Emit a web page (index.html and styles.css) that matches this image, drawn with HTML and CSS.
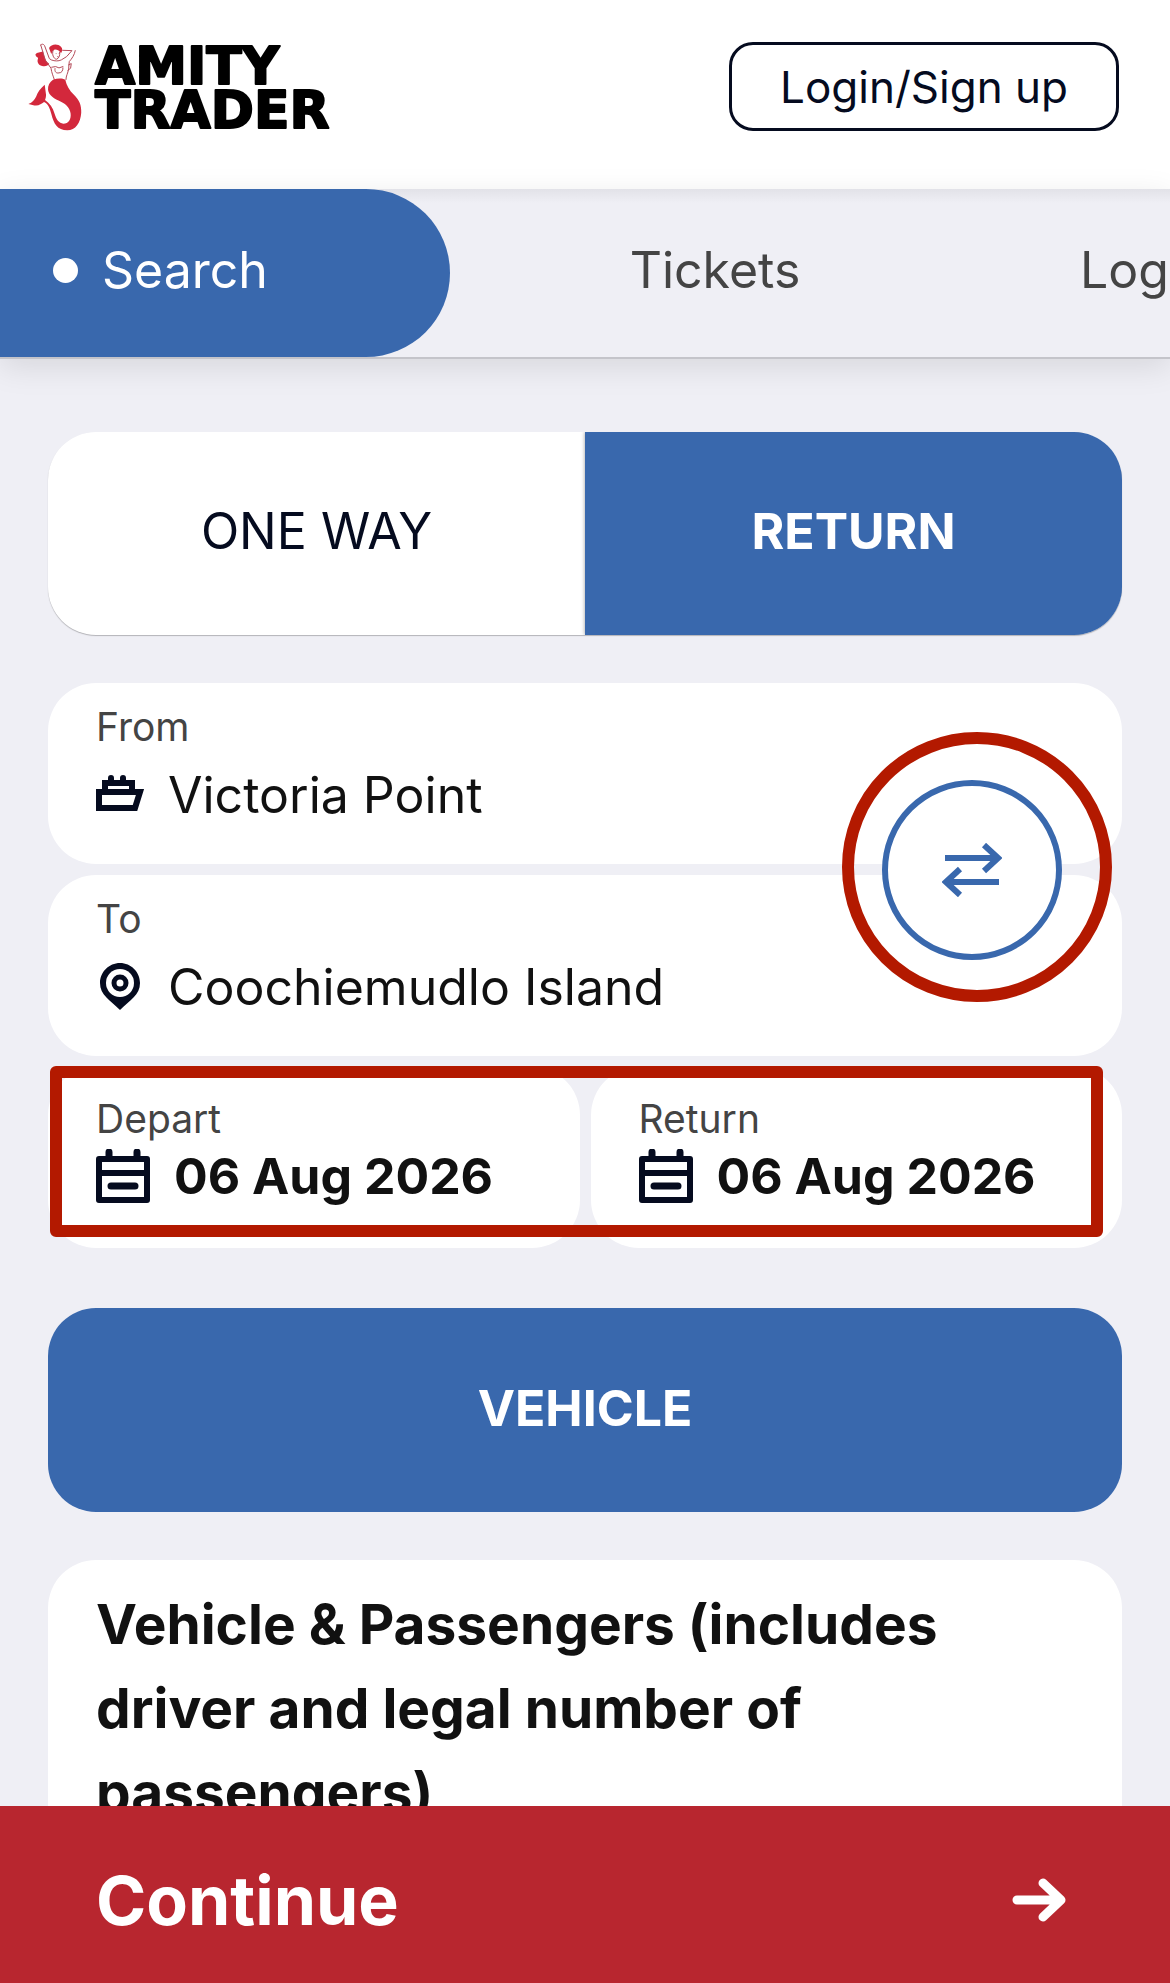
FILE: index.html
```
<!DOCTYPE html>
<html lang="en">
<head>
    <meta charset="UTF-8">
    <meta name="viewport" content="width=device-width, initial-scale=1.0">
    <title>Amity Trader</title>
    <link rel="stylesheet" href="styles.css">
</head>
<body>
    <header class="header">
        <a class="logo" href="#">
            <svg class="mermaid" viewBox="80 64 168 268" aria-hidden="true">
                <!-- hair -->
                <path d="M146 82c6-12 26-14 36-4 6 6 4 14 0 20-4-8-12-12-20-11-6 4-8 8-9 14z" fill="#d3283c"/>
                <path d="M128 92c-8 4-18 2-23 10 2 10 8 6 8 12-6 14 6 24 18 23 8 0 13-2 15-8-10-6-14-18-18-37z" fill="#d3283c"/>
                <!-- arms and body -->
                <path d="M121 73c4-5 10-2 12 3l14 38 6 4c10 4 22 4 30 0l16-10 16-18-28-1M121 73l14 46 17 24c2 14 6 22 10 34M225 90c-2 12-10 24-18 33l-2 22c-2 14-8 20-8 32M158 90c-4 12 2 24 10 26 8-2 12-12 10-22M154 140l12-2 10 4 12-4M164 144c-2 10 4 15 12 13 8 0 12-6 12-15M205 133l8-4-2 14-8 6" fill="none" stroke="#b44a58" stroke-width="3" stroke-linecap="round" stroke-linejoin="round"/>
                <path d="M166 99h3m6 0h3m-8 9h5" stroke="#b44a58" stroke-width="2" fill="none"/>
                <!-- tail -->
                <path d="M158 178c14-5 28-5 37 0 4 18 12 32 26 45 16 15 23 32 22 54-2 30-17 53-42 53-30 0-41-20-48-49-4-16-10-31-22-36-8 6-16 12-29 10l-18-4c12-5 18-12 23-22 5-13 12-24 26-36l4 30c0 8-2 12-3 16 14 10 24 23 28 39 6 20 14 31 27 32 16 0 24-14 22-31-2-16-14-28-29-35-20-9-37-18-39-36-1-13 5-23 15-30z" fill="#d3283c"/>
            </svg>
            <svg class="wordmark" viewBox="0 0 260 89">
                <text x="1" y="42">AMITY</text>
                <text x="1" y="86">TRADER</text>
            </svg>
        </a>
        <button class="login" type="button">Login/Sign up</button>
    </header>

    <nav class="tabs">
        <a class="tab active" href="#"><span class="dot"></span>Search</a>
        <a class="tab tickets" href="#">Tickets</a>
        <a class="tab account" href="#">Login</a>
    </nav>

    <main class="main">
        <div class="toggle">
            <button class="toggle-option" type="button">ONE WAY</button>
            <button class="toggle-option selected" type="button">RETURN</button>
        </div>

        <div class="fields">
            <div class="route">
                <div class="card field">
                    <label for="from">From</label>
                    <div class="value">
                        <svg class="icon" viewBox="0 0 48 48" aria-hidden="true">
                            <path d="M15 7v5M27 7v5" fill="none" stroke="#050b1f" stroke-width="6" stroke-linecap="round"/>
                            <path d="M9 20v-8h27v8M3 21h41l-5 16H3z" fill="none" stroke="#050b1f" stroke-width="6"/>
                        </svg>
                        <select id="from">
                            <option>Victoria Point</option>
                        </select>
                    </div>
                </div>
                <div class="card field">
                    <label for="to">To</label>
                    <div class="value">
                        <svg class="icon" viewBox="0 0 48 48" aria-hidden="true">
                            <path d="M24 0C13 0 4 9 4 20c0 12 10 17 20 27 10-10 20-15 20-27C44 9 35 0 24 0z" fill="#050b1f"/>
                            <circle cx="24" cy="20" r="14" fill="#fff"/>
                            <circle cx="24" cy="20" r="6" fill="none" stroke="#050b1f" stroke-width="5"/>
                        </svg>
                        <select id="to">
                            <option>Coochiemudlo Island</option>
                        </select>
                    </div>
                </div>
                <button class="swap" type="button" aria-label="Swap">
                    <svg viewBox="0 0 60 54" aria-hidden="true">
                        <path d="M3 15h52M42 2l14 13-14 13M57 39H5M18 26L4 39l14 13" fill="none" stroke="#3968ad" stroke-width="6"/>
                    </svg>
                </button>
                <div class="ring"></div>
            </div>

            <div class="dates">
                <div class="card field date">
                    <label for="depart">Depart</label>
                    <div class="value">
                        <svg class="calendar" viewBox="0 0 54 54" aria-hidden="true">
                            <path d="M13 3v6M41 3v6M15 37h24" fill="none" stroke="#050b1f" stroke-width="7" stroke-linecap="round"/>
                            <path d="M3 10h48v41H3zM3 24h48" fill="none" stroke="#050b1f" stroke-width="6" stroke-linejoin="round"/>
                        </svg>
                        <input type="text" id="depart" value="06 Aug 2026" readonly>
                    </div>
                </div>
                <div class="card field date">
                    <label for="return">Return</label>
                    <div class="value">
                        <svg class="calendar" viewBox="0 0 54 54" aria-hidden="true">
                            <path d="M13 3v6M41 3v6M15 37h24" fill="none" stroke="#050b1f" stroke-width="7" stroke-linecap="round"/>
                            <path d="M3 10h48v41H3zM3 24h48" fill="none" stroke="#050b1f" stroke-width="6" stroke-linejoin="round"/>
                        </svg>
                        <input type="text" id="return" value="06 Aug 2026" readonly>
                    </div>
                </div>
                <div class="frame"></div>
            </div>
        </div>

        <button class="vehicle" type="button">VEHICLE</button>

        <section class="card passengers">
            <h2>Vehicle &amp; Passengers (includes driver and legal number of passengers)</h2>
        </section>
    </main>

    <button class="continue" type="button">
        Continue
        <svg viewBox="0 0 54 46" aria-hidden="true">
            <path d="M5 23h42M31 6l18 17-18 17" fill="none" stroke="#fff" stroke-width="9" stroke-linecap="round" stroke-linejoin="round"/>
        </svg>
    </button>
</body>
</html>
```
FILE: styles.css
```
* {
    box-sizing: border-box;
}

body {
    margin: 0;
    height: 100vh;
    display: flex;
    flex-direction: column;
    overflow: hidden;
    font-family: Inter, "Liberation Sans", sans-serif;
    background-color: #efeff5;
    color: #111;
}

button,
select,
input {
    font: inherit;
    color: inherit;
    border: none;
    padding: 0;
    margin: 0;
    background: none;
}

button {
    cursor: pointer;
}

a {
    text-decoration: none;
    color: inherit;
}

/* Header */
.header {
    flex: none;
    display: flex;
    justify-content: space-between;
    align-items: center;
    padding: 42px 51px 58px 27px;
    background-color: white;
}

.logo {
    display: flex;
    align-items: center;
    gap: 11px;
}

.mermaid {
    width: 56px;
    height: 89px;
}

.wordmark {
    width: 260px;
    height: 89px;
    overflow: visible;
    font-family: "DejaVu Sans", sans-serif;
    font-weight: bold;
    font-size: 52px;
    fill: black;
    stroke: black;
    stroke-width: 2px;
    stroke-linejoin: round;
}

.login {
    height: 89px;
    padding: 0 48px;
    border: 3px solid #050b1f;
    border-radius: 24px;
    font-size: 44px;
    color: #050b1f;
}

/* Tabs */
.tabs {
    flex: none;
    display: flex;
    position: relative;
    z-index: 1;
    height: 170px;
    border-bottom: 2px solid #c4c4ca;
    background: linear-gradient(#e2e2e8, #efeff5 14px);
    box-shadow: 0 8px 30px rgba(0, 0, 0, 0.1);
    font-size: 50px;
    color: #444;
    white-space: nowrap;
}

.tab {
    flex: none;
    display: flex;
    align-items: center;
    padding-bottom: 6px;
}

.tab.active {
    width: 450px;
    padding-left: 53px;
    gap: 24px;
    border-radius: 0 84px 84px 0;
    background-color: #3968ad;
    color: white;
}

.dot {
    width: 25px;
    height: 25px;
    border-radius: 50%;
    background-color: white;
}

.tab.tickets {
    flex: 0 0 530px;
    justify-content: center;
}

.tab.account {
    flex: 1 0 0;
    min-width: 0;
    padding-left: 100px;
    overflow: hidden;
}

/* Search form */
.main {
    flex: 1;
    min-height: 0;
    padding: 73px 48px 0;
    overflow: hidden;
}

.toggle {
    display: flex;
    border-radius: 48px;
    overflow: hidden;
    background-color: white;
    box-shadow: 0 1px 1px rgba(0, 0, 0, 0.25);
}

.toggle-option {
    flex: 1;
    height: 203px;
    padding-bottom: 6px;
    font-size: 50px;
    color: #050b1f;
}

.toggle-option.selected {
    background-color: #3968ad;
    color: white;
    font-weight: bold;
    box-shadow: 0 0 4px rgba(0, 0, 0, 0.4);
}

.fields {
    display: flex;
    flex-direction: column;
    gap: 11px;
    margin-top: 48px;
}

.route {
    display: flex;
    flex-direction: column;
    gap: 11px;
    position: relative;
}

.card {
    background-color: white;
    border-radius: 48px;
}

.field {
    display: flex;
    flex-direction: column;
    gap: 14px;
    height: 181px;
    padding: 20px 48px 0;
}

.field label {
    font-size: 39px;
    line-height: 48px;
    color: #444;
}

.value {
    display: flex;
    align-items: center;
    gap: 24px;
    height: 60px;
    font-size: 50px;
}

.icon {
    width: 48px;
    height: 48px;
}

.value select {
    appearance: none;
    line-height: 60px;
}

.dates {
    display: flex;
    gap: 11px;
    position: relative;
}

.date {
    flex: 1;
    min-width: 0;
    gap: 3px;
    padding: 28px 0 0 48px;
}

.calendar {
    flex: none;
    width: 54px;
    height: 54px;
}

.value input {
    flex: 1;
    min-width: 0;
    height: 60px;
    font-weight: bold;
}

.swap {
    position: absolute;
    top: calc(50% - 90px);
    right: 60px;
    width: 180px;
    height: 180px;
    border: 6px solid #3968ad;
    border-radius: 50%;
    background-color: white;
    display: flex;
    justify-content: center;
    align-items: center;
}

.swap svg {
    width: 60px;
    height: 54px;
}

/* Red highlights */
.ring {
    position: absolute;
    top: 49px;
    right: 10px;
    width: 270px;
    height: 270px;
    border: 12px solid #b31900;
    border-radius: 50%;
    pointer-events: none;
}

.frame {
    position: absolute;
    top: -1px;
    right: 19px;
    bottom: 11px;
    left: 2px;
    border: 12px solid #b31900;
    border-radius: 6px;
    pointer-events: none;
}

.vehicle {
    display: block;
    width: 100%;
    height: 204px;
    margin-top: 60px;
    padding-bottom: 4px;
    border-radius: 48px;
    background-color: #3968ad;
    color: white;
    font-size: 50px;
    font-weight: bold;
}

.passengers {
    margin-top: 48px;
    padding: 22px 48px;
}

.passengers h2 {
    margin: 0;
    max-width: 900px;
    font-size: 55px;
    line-height: 84px;
}

/* Bottom bar */
.continue {
    flex: none;
    display: flex;
    justify-content: space-between;
    align-items: center;
    width: 100%;
    height: 177px;
    padding: 10px 104px 0 96px;
    background-color: #b8262f;
    color: white;
    font-size: 68px;
    font-weight: bold;
}

.continue svg {
    width: 54px;
    height: 46px;
}
```
